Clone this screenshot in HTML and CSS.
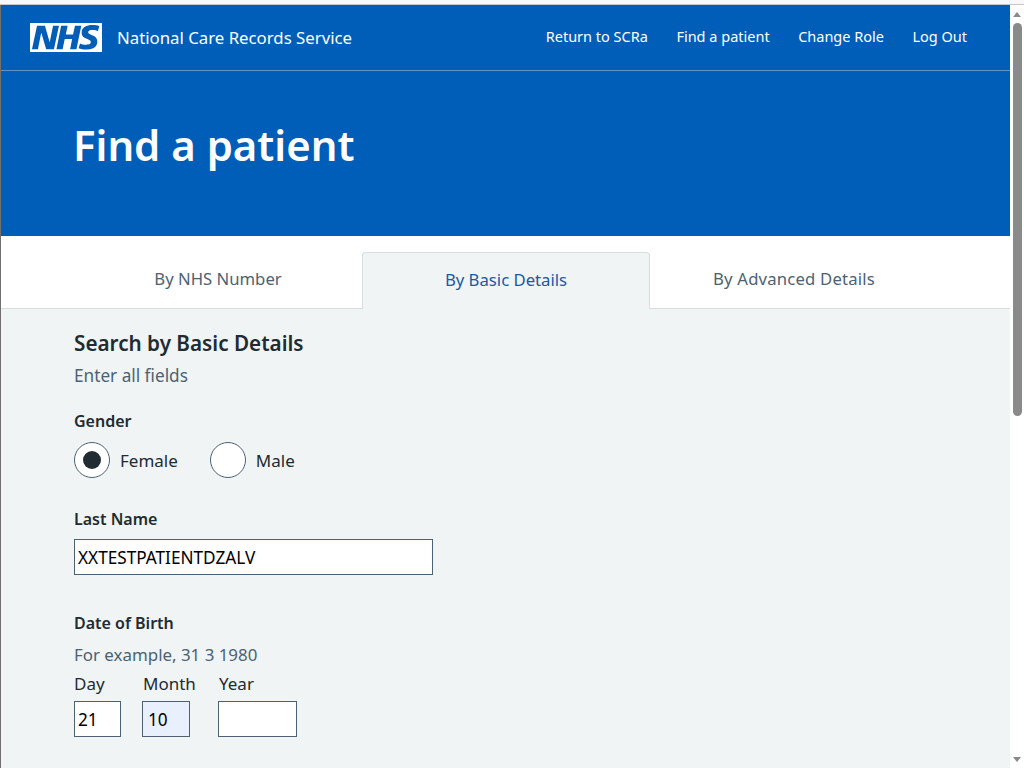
FILE: index.html
```html
<!DOCTYPE html>
<html lang="en">
<head>
<meta charset="utf-8">
<title>Find a patient</title>
<link rel="stylesheet" href="styles.css">
</head>
<body>
<div class="topline"></div>
<div class="window">
  <div class="page">
    <header class="site-header">
      <div class="brand">
        <svg class="logo" viewBox="0 0 40 16" aria-label="NHS"><path fill="#fff" d="M0 0h40v16H0z"/><path fill="#005eb8" d="M3.9 1.5h4.4l2.6 9h.1l1.8-9h3.3l-2.8 13H9l-2.7-9h-.1l-1.8 9H1.1M17.3 1.5h3.6l-1 4.9h4L25 1.5h3.5l-2.7 13h-3.5l1.1-5.6h-4.1l-1.2 5.6h-3.4M37.7 4.4c-.7-.3-1.6-.6-2.9-.6-1.4 0-2.5.2-2.5 1.3 0 1.8 5.1 1.2 5.1 5.1 0 3.6-3.3 4.5-6.4 4.5-1.3 0-2.9-.3-4-.7l.8-2.7c.7.4 2.1.7 3.2.7s2.8-.2 2.8-1.5c0-2.1-5.1-1.3-5.1-5 0-3.4 2.9-4.4 5.8-4.4 1.6 0 3.1.2 4 .6"/></svg>
        <span class="service">National Care Records Service</span>
      </div>
      <nav class="top-nav">
        <a href="#">Return to SCRa</a>
        <a href="#">Find a patient</a>
        <a href="#">Change Role</a>
        <a href="#">Log Out</a>
      </nav>
    </header>
    <section class="hero"><h1>Find a patient</h1></section>
    <div class="tabs-bar">
      <div class="tabs">
        <a class="tab" href="#">By NHS Number</a>
        <a class="tab active" href="#">By Basic Details</a>
        <a class="tab tab-wide" href="#">By Advanced Details</a>
      </div>
    </div>
    <main class="content">
      <h2>Search by Basic Details</h2>
      <p class="hint">Enter all fields</p>
      <div class="label gender-label">Gender</div>
      <div class="radios">
        <label class="radio"><span class="dot checked"></span>Female</label>
        <label class="radio"><span class="dot"></span>Male</label>
      </div>
      <div class="label name-label">Last Name</div>
      <input class="text-input" type="text" value="XXTESTPATIENTDZALV">
      <div class="label dob-label">Date of Birth</div>
      <p class="hint example">For example, 31 3 1980</p>
      <div class="dob">
        <div class="dob-field"><span>Day</span><input class="w-day" type="text" value="21"></div>
        <div class="dob-field"><span class="nudge">Month</span><input class="w-month filled" type="text" value="10"></div>
        <div class="dob-field"><span class="nudge">Year</span><input class="w-year" type="text"></div>
      </div>
    </main>
  </div>
  <aside class="scrollbar">
    <span class="arrow up"></span>
    <span class="thumb"></span>
    <span class="arrow down"></span>
  </aside>
</div>
</body>
</html>
```
FILE: styles.css
```css
* { box-sizing: border-box; }
html, body { margin: 0; height: 100%; overflow: hidden; }
body { font-family: "Noto Sans", "Open Sans", sans-serif; color: #212b32; background: #fff; }
a { text-decoration: none; color: inherit; }
h1, h2, p { margin: 0; }

.topline { height: 5px; background: #f8f8f8; border-bottom: 1px solid #c8c8c8; }
.window { display: flex; height: 763px; border-left: 1px solid #707070; }
.page { width: 1009px; height: 763px; overflow: hidden; }

.site-header { height: 66px; background: #005eb8; border-bottom: 1px solid #5c94cd; display: flex; align-items: center; justify-content: space-between; padding: 0 43px 0 29px; color: #fff; }
.brand { display: flex; align-items: center; gap: 15px; }
.logo { width: 72px; height: 29px; display: block; }
.service { font-size: 16.8px; }
.top-nav { display: flex; gap: 28.5px; font-size: 14.5px; padding-bottom: 4px; }

.hero { height: 165px; background: #005eb8; padding: 48px 72px 0; color: #fff; }
.hero h1 { font-size: 41.9px; line-height: 52px; font-weight: 650; }

.tabs-bar { height: 73px; padding: 16px 72px 0 73px; border-bottom: 1px solid #d8dde0; }
.tabs { display: grid; grid-template-columns: repeat(3, 288px); height: 57px; }
.tab { display: flex; align-items: center; justify-content: center; font-size: 16.7px; color: #4c6272; padding-bottom: 4px; }
.tab-wide { letter-spacing: .18px; }
.tab.active { background: #f0f4f5; border: 1px solid #d8dde0; border-bottom: 0; border-radius: 4px 4px 0 0; color: #185aa5; padding-bottom: 4px; }

.content { height: 460px; background: #f0f4f5; padding: 19px 73px 0; }
.content h2 { font-size: 20.7px; line-height: 30px; font-weight: 600; }
.hint { font-size: 17.2px; line-height: 24px; color: #4c6272; margin-top: 6px; }
.label { font-size: 16px; line-height: 24px; font-weight: 600; }
.gender-label { margin-top: 21px; }
.radios { display: flex; gap: 32px; margin-top: 9px; }
.radio { display: flex; align-items: center; gap: 10px; font-size: 17px; }
.dot { width: 36px; height: 36px; border-radius: 50%; background: #fff; border: 1px solid #4c6272; display: flex; align-items: center; justify-content: center; }
.dot.checked::after { content: ""; width: 18px; height: 18px; border-radius: 50%; background: #212b32; }
.name-label { margin-top: 29px; }
input { display: block; font-family: inherit; font-size: 17.2px; color: #000; background: #fff; border: 1px solid #4c6272; border-radius: 0; padding: 0 3px; height: 36px; outline: 0; }
.text-input { width: 359px; margin-top: 8px; }
.dob-label { margin-top: 36px; }
.hint.example { margin-top: 8px; font-size: 16.9px; }
.dob { display: flex; margin-top: 5px; }
.dob-field { display: flex; flex-direction: column; gap: 5px; font-size: 17px; line-height: 24px; }
.nudge { padding-left: 1px; }
.w-day { width: 47px; margin-right: 21px; }
.w-month { width: 48px; margin-right: 28px; padding-left: 5px; }
.w-year { width: 79px; }
.filled { background: #e8f0fe; }

.scrollbar { width: 14px; height: 763px; background: #fff; display: flex; flex-direction: column; align-items: center; }
.arrow { width: 0; height: 0; border-left: 4px solid transparent; border-right: 4px solid transparent; }
.arrow.up { border-bottom: 5px solid #8a8a8a; margin-top: 7px; }
.arrow.down { border-top: 5px solid #8a8a8a; margin-top: auto; margin-bottom: 6px; }
.thumb { width: 9px; height: 393px; background: #8a8a8a; border-radius: 5px; margin-top: 6px; }
```
